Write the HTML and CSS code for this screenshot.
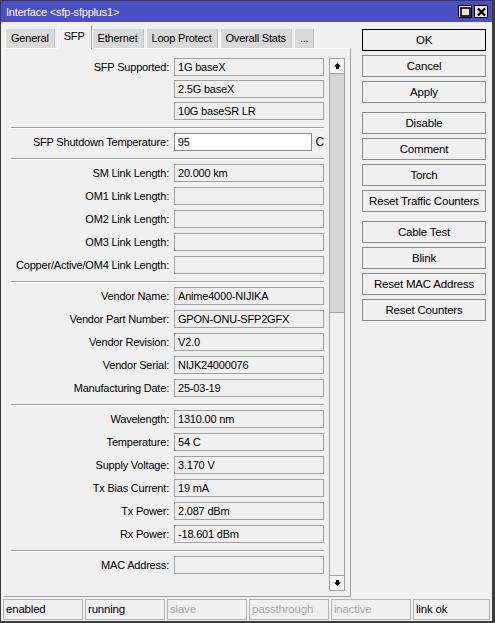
FILE: index.html
```html
<!DOCTYPE html>
<html lang="en">
  <head>
    <meta charset="UTF-8" />
    <title>Interface &lt;sfp-sfpplus1&gt;</title>
    <link rel="stylesheet" href="styles.css">
  </head>
  <body>
    <div class="window">
      <div class="titlebar">
        <span class="title">Interface &lt;sfp-sfpplus1&gt;</span>
        <div class="tb-buttons">
          <span class="tb-btn">
            <svg width="11" height="10" viewBox="0 0 11 10"><rect x="1" y="1" width="9" height="8" fill="none" stroke="#000" stroke-width="1.6"/></svg>
          </span>
          <span class="tb-btn">
            <svg width="11" height="10" viewBox="0 0 11 10"><path d="M2 1.5 L9 8.5 M9 1.5 L2 8.5" stroke="#000" stroke-width="2.2"/></svg>
          </span>
        </div>
      </div>

      <div class="main">
        <div class="left">
          <div class="tabs">
            <div class="tab">General</div>
            <div class="tab active">SFP</div>
            <div class="tab">Ethernet</div>
            <div class="tab">Loop Protect</div>
            <div class="tab">Overall Stats</div>
            <div class="tab">...</div>
          </div>
          <div class="panel">
            <div class="form">
              <div class="group tight">
                <div class="row"><label>SFP Supported:</label><div class="field">1G baseX</div></div>
                <div class="row"><label></label><div class="field">2.5G baseX</div></div>
                <div class="row"><label></label><div class="field">10G baseSR LR</div></div>
              </div>
              <div class="sep"></div>
              <div class="group">
                <div class="row"><label>SFP Shutdown Temperature:</label><div class="field edit">95</div><span class="unit">C</span></div>
              </div>
              <div class="sep"></div>
              <div class="group">
                <div class="row"><label>SM Link Length:</label><div class="field">20.000 km</div></div>
                <div class="row"><label>OM1 Link Length:</label><div class="field"></div></div>
                <div class="row"><label>OM2 Link Length:</label><div class="field"></div></div>
                <div class="row"><label>OM3 Link Length:</label><div class="field"></div></div>
                <div class="row"><label>Copper/Active/OM4 Link Length:</label><div class="field"></div></div>
              </div>
              <div class="sep"></div>
              <div class="group">
                <div class="row"><label>Vendor Name:</label><div class="field">Anime4000-NIJIKA</div></div>
                <div class="row"><label>Vendor Part Number:</label><div class="field">GPON-ONU-SFP2GFX</div></div>
                <div class="row"><label>Vendor Revision:</label><div class="field">V2.0</div></div>
                <div class="row"><label>Vendor Serial:</label><div class="field">NIJK24000076</div></div>
                <div class="row"><label>Manufacturing Date:</label><div class="field">25-03-19</div></div>
              </div>
              <div class="sep"></div>
              <div class="group">
                <div class="row"><label>Wavelength:</label><div class="field">1310.00 nm</div></div>
                <div class="row"><label>Temperature:</label><div class="field">54 C</div></div>
                <div class="row"><label>Supply Voltage:</label><div class="field">3.170 V</div></div>
                <div class="row"><label>Tx Bias Current:</label><div class="field">19 mA</div></div>
                <div class="row"><label>Tx Power:</label><div class="field">2.087 dBm</div></div>
                <div class="row"><label>Rx Power:</label><div class="field">-18.601 dBm</div></div>
              </div>
              <div class="sep"></div>
              <div class="group">
                <div class="row"><label>MAC Address:</label><div class="field"></div></div>
              </div>
            </div>
            <div class="scroll">
              <div class="sb-btn">
                <svg width="7" height="6" viewBox="0 0 7 6"><polygon points="3.5,0 7,3.5 5,3.5 5,6 2,6 2,3.5 0,3.5" fill="#000"/></svg>
              </div>
              <div class="sb-track"></div>
              <div class="sb-rest"></div>
              <div class="sb-btn">
                <svg width="7" height="6" viewBox="0 0 7 6"><polygon points="3.5,6 7,2.5 5,2.5 5,0 2,0 2,2.5 0,2.5" fill="#000"/></svg>
              </div>
            </div>
          </div>
        </div>

        <div class="buttons">
          <div class="btn default">OK</div>
          <div class="btn">Cancel</div>
          <div class="btn">Apply</div>
          <div class="btn gap">Disable</div>
          <div class="btn">Comment</div>
          <div class="btn">Torch</div>
          <div class="btn">Reset Traffic Counters</div>
          <div class="btn gap">Cable Test</div>
          <div class="btn">Blink</div>
          <div class="btn">Reset MAC Address</div>
          <div class="btn">Reset Counters</div>
        </div>
      </div>

      <div class="status">
        <div class="cell">enabled</div>
        <div class="cell">running</div>
        <div class="cell off">slave</div>
        <div class="cell off">passthrough</div>
        <div class="cell off">inactive</div>
        <div class="cell last">link ok</div>
      </div>
    </div>
  </body>
</html>
```

FILE: styles.css
```css
* {
  padding: 0;
  margin: 0;
  box-sizing: border-box;
}
body {
  font-family: "Liberation Sans", Arial, sans-serif;
  font-size: 11px;
  letter-spacing: -0.2px;
  color: #000;
  background: #f0f0f0;
}
.window {
  display: flex;
  flex-direction: column;
  width: 495px;
  height: 623px;
  background: #f0f0f0;
  border-top: 1px solid #3c3c3c;
  border-left: 1px solid #3c3c3c;
  border-right: 3px solid #3c3c3c;
  border-bottom: 2px solid #3c3c3c;
}
.titlebar {
  display: flex;
  align-items: center;
  justify-content: space-between;
  height: 21px;
  background: #4b4fc6;
  color: #fff;
  padding: 0 4px 0 5px;
}
.tb-buttons {
  display: flex;
  gap: 2px;
}
.tb-btn {
  display: flex;
  align-items: center;
  justify-content: center;
  width: 14px;
  height: 13px;
  background: #e6e6e6;
  border: 1px solid #000;
}

.main {
  display: flex;
  padding-top: 3px;
}
.left {
  margin-left: 2px;
  width: 348px;
}
.tabs {
  display: flex;
  align-items: flex-end;
  height: 23px;
  padding-left: 2px;
}
.tab {
  height: 19px;
  line-height: 18px;
  padding: 0 5px;
  margin-right: 2px;
  background: #d9d9d9;
  border-left: 1px solid #fff;
  border-right: 1px solid #c4c4c4;
}
.tab.active {
  position: relative;
  z-index: 1;
  height: 24px;
  line-height: 21px;
  margin-bottom: -1px;
  margin-right: 0;
  padding: 0 6px;
  background: #f0f0f0;
  border-top: 1px solid #fff;
  border-right: 1px solid #a0a0a0;
}
.panel {
  display: flex;
  height: 549px;
  border-top: 1px solid #fff;
  border-left: 1px solid #fff;
  border-right: 1px solid #a0a0a0;
  border-bottom: 1px solid #a0a0a0;
  padding-top: 9px;
}
.form {
  width: 320px;
}
.group .row + .row {
  margin-top: 5px;
}
.group.tight .row + .row {
  margin-top: 4px;
}
.row {
  display: flex;
  align-items: center;
  height: 18px;
}
.row label {
  width: 166px;
  padding-right: 1px;
  text-align: right;
  margin-right: 4px;
  white-space: nowrap;
}
.field {
  width: 150px;
  height: 18px;
  line-height: 16px;
  padding-left: 3px;
  border: 1px solid #a0a0a0;
  background: #f0f0f0;
  white-space: nowrap;
}
.field.edit {
  width: 138px;
  background: #fff;
  border-color: #8c8c8c;
}
.unit {
  margin-left: 4px;
  font-size: 12px;
}
.sep {
  width: 313px;
  height: 2px;
  margin: 7px 0 4px 7px;
  border-top: 1px solid #a0a0a0;
  border-bottom: 1px solid #fff;
}

.scroll {
  display: flex;
  flex-direction: column;
  width: 16px;
  height: 533px;
  margin-left: 5px;
}
.sb-btn {
  display: flex;
  align-items: center;
  justify-content: center;
  height: 16px;
  background: #f7f7f7;
  border: 1px solid #a0a0a0;
}
.sb-track {
  height: 238px;
  background: #d6d6d6;
  border-left: 1px solid #a0a0a0;
  border-right: 1px solid #a0a0a0;
}
.sb-rest {
  flex: 1;
  background: #f0f0f0;
  border: 1px solid #a0a0a0;
  border-bottom: none;
}

.buttons {
  display: flex;
  flex-direction: column;
  gap: 4px;
  margin-left: 11px;
  padding-top: 4px;
  width: 124px;
}
.btn {
  height: 22px;
  line-height: 20px;
  text-align: center;
  font-size: 11.5px;
  background: #f0f0f0;
  border: 1px solid #8a8a8a;
}
.btn.default {
  border-color: #000;
}
.btn.gap {
  margin-top: 5px;
}

.status {
  display: flex;
  gap: 2px;
  margin-top: 2px;
  padding-left: 2px;
}
.cell {
  width: 80px;
  height: 21px;
  line-height: 19px;
  padding-left: 2px;
  font-size: 11.5px;
  border: 1px solid #b4b4b4;
}
.cell.off {
  color: #a8a8a8;
}
.cell.last {
  width: 77px;
}
```
